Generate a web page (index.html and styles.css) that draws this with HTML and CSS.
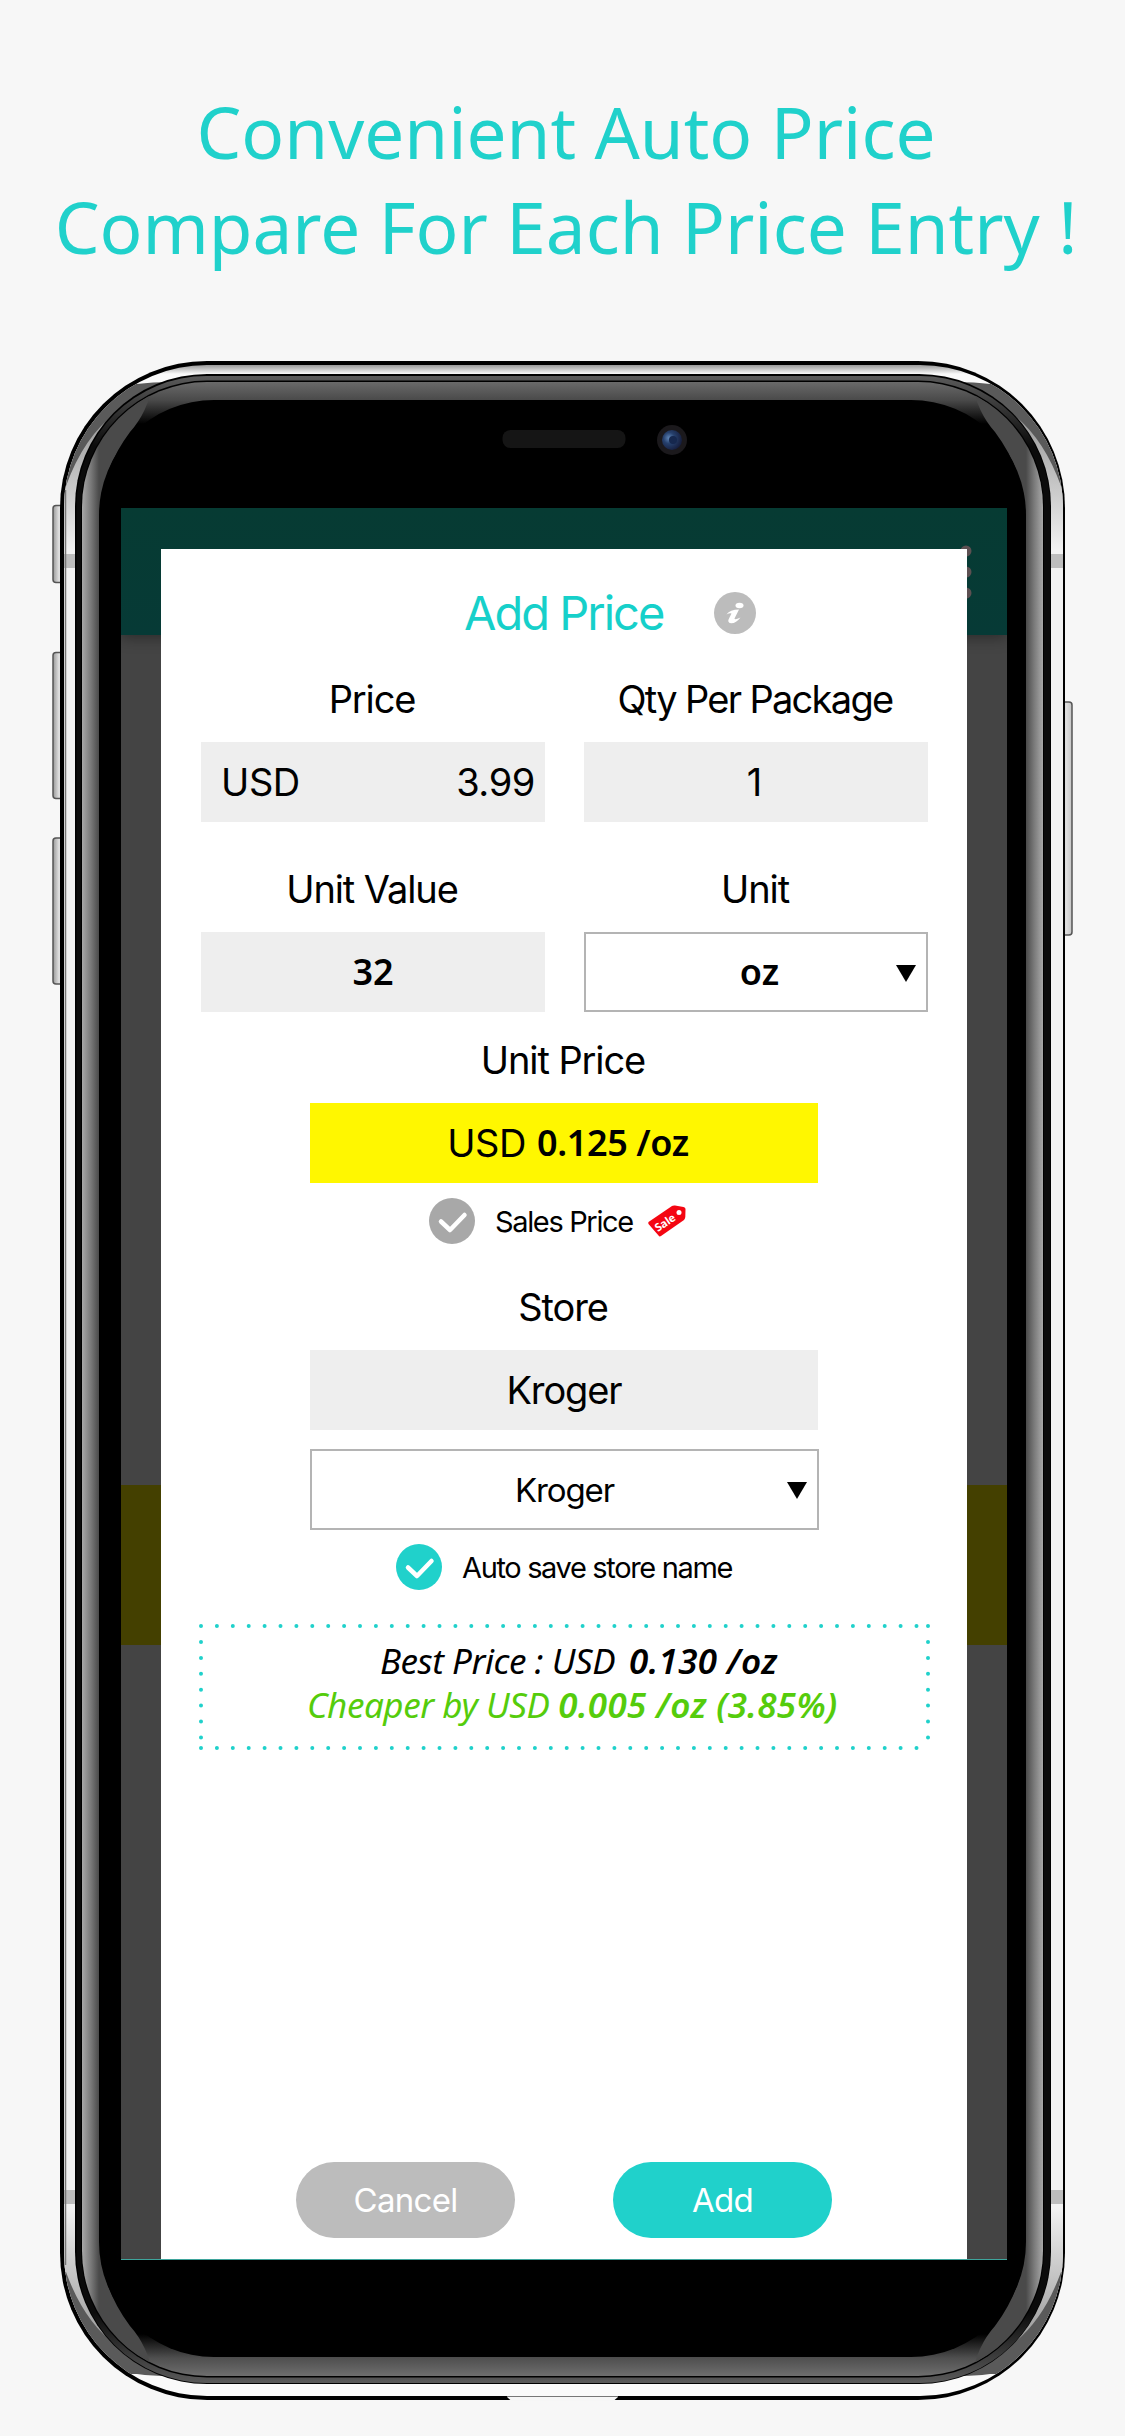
FILE: index.html
```html
<!DOCTYPE html>
<html lang="en">
<head>
<meta charset="utf-8">
<title>Add Price</title>
<link rel="stylesheet" href="styles.css">
</head>
<body>
<main class="page">
  <h1 class="headline">Convenient Auto Price<br>Compare For Each Price Entry !</h1>

  <div class="phone">
    <svg class="phone-frame" viewBox="40 350 1045 2060" width="1045" height="2060" aria-hidden="true">
      <defs>
        <linearGradient id="rim" gradientUnits="userSpaceOnUse" x1="0" y1="365" x2="0" y2="374"><stop offset="0" stop-color="#999"/><stop offset="1" stop-color="#fafafa"/></linearGradient>
        <linearGradient id="rimSide" gradientUnits="userSpaceOnUse" x1="0" y1="420" x2="0" y2="550"><stop offset="0" stop-color="#9c9c9c"/><stop offset=".6" stop-color="#cfcfcf"/><stop offset="1" stop-color="#f2f2f2"/></linearGradient>
        <linearGradient id="band" gradientUnits="userSpaceOnUse" x1="0" y1="376" x2="0" y2="2383"><stop offset="0" stop-color="#5a5a5a"/><stop offset=".01" stop-color="#444"/><stop offset=".035" stop-color="#0b0b0b"/><stop offset=".965" stop-color="#0b0b0b"/><stop offset=".99" stop-color="#444"/><stop offset="1" stop-color="#5a5a5a"/></linearGradient>
        <linearGradient id="bezel" gradientUnits="userSpaceOnUse" x1="0" y1="382" x2="0" y2="2376"><stop offset="0" stop-color="#6a6a6a"/><stop offset=".009" stop-color="#4a4a4a"/><stop offset=".021" stop-color="#000"/><stop offset=".979" stop-color="#000"/><stop offset=".991" stop-color="#4f4f4f"/><stop offset="1" stop-color="#6e6e6e"/></linearGradient>
        <linearGradient id="edge" gradientUnits="userSpaceOnUse" x1="82" y1="0" x2="99" y2="0"><stop offset="0" stop-color="#a8a8a8"/><stop offset=".55" stop-color="#777"/><stop offset="1" stop-color="#4a4a4a"/></linearGradient>
        <linearGradient id="key" x1="0" y1="0" x2="1" y2="0"><stop offset="0" stop-color="#999"/><stop offset=".5" stop-color="#e0e0e0"/><stop offset="1" stop-color="#c4c4c4"/></linearGradient>
        <radialGradient id="lens" cx=".35" cy=".4" r=".7"><stop offset="0" stop-color="#5f86b8"/><stop offset=".4" stop-color="#26406c"/><stop offset="1" stop-color="#141a38"/></radialGradient>
        <clipPath id="rimClip"><rect x="64" y="365" width="999" height="2031" rx="143"/></clipPath>
        <clipPath id="bezelClip"><rect x="82" y="382" width="961" height="1994" rx="125"/></clipPath>
        <g id="rimCorner">
          <path d="M60 400H150V1400H60Z" fill="url(#rimSide)"/>
          <path d="M60 384H137Q152 382 172 382L150 396L117 412Q84 436 66 486H60Z" fill="#5a5a5a"/>
          <rect x="60" y="554" width="20" height="14" fill="#bdbdbd"/>
        </g>
        <path id="bezelCorner" d="M82 382H153Q148 412 130 432Q103 468 100 510V1400H82Z" fill="url(#edge)"/>
      </defs>
      <g fill="url(#key)" stroke="#555" stroke-width="1.500">
        <rect x="53" y="505.500" width="12" height="77" rx="3"/>
        <rect x="53" y="652.500" width="12" height="146" rx="3"/>
        <rect x="53" y="838" width="12" height="146" rx="3"/>
        <rect x="1060" y="702" width="12" height="233" rx="3"/>
      </g>
      <rect x="60" y="361" width="1005" height="2039" rx="147"/>
      <rect x="64" y="365" width="999" height="2031" rx="143" fill="url(#rim)"/>
      <g clip-path="url(#rimClip)">
        <use href="#rimCorner"/>
        <use href="#rimCorner" transform="translate(1127 0) scale(-1 1)"/>
        <use href="#rimCorner" transform="translate(0 2758) scale(1 -1)"/>
        <use href="#rimCorner" transform="translate(1127 2758) scale(-1 -1)"/>
      </g>
      <path d="M65.500 490V2265" stroke="#777" stroke-width="1.500"/>
      <rect x="75" y="374" width="976" height="2010" rx="132"/>
      <rect x="76.500" y="376" width="973.500" height="2007" rx="130" fill="url(#band)"/>
      <rect x="81" y="380.500" width="963" height="1997" rx="126"/>
      <rect x="82" y="382" width="961" height="1994" rx="125" fill="url(#bezel)"/>
      <g clip-path="url(#bezelClip)">
        <use href="#bezelCorner"/>
        <use href="#bezelCorner" transform="translate(1125 0) scale(-1 1)"/>
        <use href="#bezelCorner" transform="translate(0 2758) scale(1 -1)"/>
        <use href="#bezelCorner" transform="translate(1125 2758) scale(-1 -1)"/>
      </g>
      <rect x="99" y="400" width="927" height="1957" rx="115"/>
      <rect x="502.500" y="430" width="123" height="18" rx="8" fill="#151515"/>
      <circle cx="672" cy="440" r="15" fill="#1b191c"/>
      <circle cx="672" cy="440" r="10" fill="url(#lens)"/>
      <circle cx="673" cy="440" r="4" fill="#16284e"/>
      <path d="M507 2397H618L614 2400.500H511Z" fill="#f6f6f6"/>
      <path d="M507 2396.500H618" stroke="#777"/>
    </svg>

    <div class="screen">
      <div class="app-bar">
        <svg class="more" width="12" height="54" viewBox="0 0 12 54" aria-hidden="true"><g fill="#5d5052"><circle cx="6" cy="6" r="5.500"/><circle cx="6" cy="27" r="5.500"/><circle cx="6" cy="48" r="5.500"/></g></svg>
      </div>
      <div class="highlight-row"></div>

      <form class="dialog">
        <header class="dialog-title">
          <h2 class="title">Add Price</h2>
          <svg class="info" width="42" height="42" viewBox="0 0 42 42" aria-hidden="true"><circle cx="21" cy="21" r="21" fill="#bcbcbc"/><ellipse cx="25.500" cy="13.500" rx="4" ry="2.800" fill="#fff"/><path d="M12.500 22.500Q16 17.500 25 17.500L20.500 26.500Q20.500 28.500 26.500 25.500Q22 31.500 17 31.300Q12.500 30.500 15.500 25.500L17.500 21.500Q16 20.500 12.500 22.500Z" fill="#fff"/></svg>
        </header>

        <div class="grid">
          <div class="field"><span class="label">Price</span><div class="box split"><span>USD</span><span>3.99</span></div></div>
          <div class="field"><span class="label tight">Qty Per Package</span><div class="box one">1</div></div>
          <div class="field"><span class="label">Unit Value</span><div class="box strong">32</div></div>
          <div class="field"><span class="label">Unit</span><div class="box select strong unit">oz<i class="caret"></i></div></div>
        </div>

        <section class="narrow">
          <span class="label">Unit Price</span>
          <div class="box result"><span>USD</span><span class="strong">0.125 /oz</span></div>
          <div class="check sale">
            <svg width="46" height="46" viewBox="0 0 46 46" aria-hidden="true"><circle cx="23" cy="23" r="23" fill="#a8a8a8"/><path d="M12 23.500L21 32L35.500 17" fill="none" stroke="#fff" stroke-width="4.500" stroke-linecap="round" stroke-linejoin="round"/></svg>
            <span>Sales Price</span>
            <svg class="tag" width="38" height="32" viewBox="0 0 38 32" aria-hidden="true"><path d="M0.500 17L24 1Q25 .3 27 .5L35.500 2Q37.500 2.300 37.500 4L37.300 12Q37 14 36 15L13 31Q11.500 32 10.500 30.500L.5 19Q0 18 .5 17Z" fill="#f40612"/><circle cx="31" cy="7.500" r="2.500" fill="#fff"/><text x="17" y="21.500" transform="rotate(-34 17 17.500)" text-anchor="middle" class="tag-text">Sale</text></svg>
          </div>
          <span class="label">Store</span>
          <div class="box name">Kroger</div>
          <div class="box select small name">Kroger<i class="caret"></i></div>
          <div class="check auto">
            <svg width="46" height="46" viewBox="0 0 46 46" aria-hidden="true"><circle cx="23" cy="23" r="23" fill="#20d1cb"/><path d="M12 23.500L21 32L35.500 17" fill="none" stroke="#fff" stroke-width="4.500" stroke-linecap="round" stroke-linejoin="round"/></svg>
            <span>Auto save store name</span>
          </div>
        </section>

        <section class="compare">
          <svg class="dots" width="732" height="127" viewBox="0 0 732 127" aria-hidden="true"><g fill="none" stroke="#20d1cb" stroke-width="4" stroke-linecap="round"><path d="M2 2H729M729 2H729.100" stroke-dasharray="0 15.900"/><path d="M2 124H729" stroke-dasharray="0 15.900"/><path d="M2 18V115" stroke-dasharray="0 15.900"/><path d="M729 18V115" stroke-dasharray="0 15.900"/></g></svg>
          <p class="best"><span>Best Price : USD</span><b>0.130 /oz</b></p>
          <p class="cheaper"><span>Cheaper by USD</span><b>0.005 /oz (3.85%)</b></p>
        </section>

        <footer class="actions">
          <button type="button" class="btn cancel">Cancel</button>
          <button type="button" class="btn add">Add</button>
        </footer>
      </form>
    </div>
  </div>
</main>
</body>
</html>
```
FILE: styles.css
```css
* { box-sizing: border-box; }

body {
  margin: 0;
  background: #f7f7f7;
  font-family: Inter, "Liberation Sans", sans-serif;
  color: #000;
}

.page {
  width: 1125px;
  height: 2436px;
  overflow: hidden;
  display: flex;
  flex-direction: column;
}

.headline {
  margin: 0;
  height: 350px;
  padding: 84px 0 0 7px;
  text-align: center;
  font: 400 71px/95px "Noto Sans", "Open Sans", sans-serif;
  color: #20d1cb;
  white-space: nowrap;
}

.phone {
  position: relative;
  width: 1045px;
  height: 2060px;
  margin-left: 40px;
  padding: 158px 78px 150px 81px;
}

.phone-frame {
  position: absolute;
  left: 0;
  top: 0;
}

.screen {
  position: relative;
  height: 1752px;
  padding: 41px 40px 0;
  background: #444;
  border-bottom: 1px solid #3fa59c;
}

.app-bar {
  position: absolute;
  inset: 0 0 auto;
  height: 127px;
  background: linear-gradient(#063b33, #063a36);
  box-shadow: 0 2px 14px rgba(0, 0, 0, .4);
}

.more {
  position: absolute;
  right: 35px;
  top: 37px;
}

.highlight-row {
  position: absolute;
  inset: 977px 0 auto;
  height: 160px;
  background: #444000;
}

.dialog {
  position: relative;
  height: 1710px;
  display: flex;
  flex-direction: column;
  padding: 0 39px 21px 40px;
  background: #fff;
}

.dialog-title {
  height: 127px;
  display: flex;
  align-items: center;
  padding-left: 263px;
  gap: 51px;
}

.title {
  margin: 0;
  width: 199px;
  font-size: 47px;
  font-weight: 400;
  line-height: 60px;
  letter-spacing: -2px;
  color: #16d0ca;
  white-space: nowrap;
}

.info { flex: none; }

.grid {
  display: grid;
  grid-template-columns: 344px 344px;
  column-gap: 39px;
  row-gap: 44px;
}

.label {
  display: block;
  height: 47px;
  margin-bottom: 19px;
  padding-right: 2px;
  text-align: center;
  font-size: 38px;
  line-height: 47px;
  letter-spacing: -1.1px;
  white-space: nowrap;
}

.label.tight { letter-spacing: -1.7px; }

.box {
  height: 80px;
  display: flex;
  align-items: center;
  justify-content: center;
  background: #eee;
  font-size: 38px;
  line-height: 80px;
  white-space: nowrap;
}

.box.split {
  justify-content: space-between;
  padding: 0 10px 0 20px;
}

.box.split, .box.result { letter-spacing: -.4px; }

.box.one { padding-right: 3px; }

.box.name { letter-spacing: -1.1px; }

.strong {
  font-family: "Noto Sans", "Open Sans", sans-serif;
  font-weight: 600;
  font-size: 36px;
}

.box.select {
  position: relative;
  background: #fff;
  border: 2px solid #b4b4b4;
}

.box.unit { padding-left: 7px; }

.caret {
  position: absolute;
  right: 10px;
  top: 31px;
  border: solid transparent;
  border-width: 17px 10px 0;
  border-top-color: #000;
}

.narrow {
  width: 508px;
  margin: 25px 0 0 109px;
}

.box.result {
  background: #fff700;
  gap: 11px;
  padding-left: 8px;
}

.box.small {
  width: 509px;
  height: 81px;
  margin-top: 19px;
  font-size: 33px;
}

.check {
  height: 46px;
  display: flex;
  align-items: center;
  font-size: 29px;
  letter-spacing: -1.35px;
  white-space: nowrap;
}

.sale { margin: 15px 0 40px; padding-left: 119px; gap: 20px; }
.auto { margin-top: 14px; padding-left: 86px; gap: 20px; }

.tag { margin-left: -5px; }

.tag-text {
  font: 700 11px "Noto Sans", sans-serif;
  letter-spacing: 0;
  fill: #fff;
}

.compare {
  position: relative;
  height: 125px;
  margin-top: 35px;
  padding-top: 14px;
  font: italic 400 35px/44px "Noto Sans", "Open Sans", sans-serif;
  white-space: nowrap;
}

.compare span { letter-spacing: -.45px; }

.compare b {
  font-weight: 600;
  letter-spacing: .3px;
}

.dots {
  position: absolute;
  left: -2px;
  top: -1px;
}

.best, .cheaper {
  margin: 0;
  height: 44px;
  display: flex;
}

.best { padding-left: 179px; gap: 14px; }
.cheaper { padding-left: 106px; gap: 9px; color: #55cc0c; }

.actions {
  display: flex;
  gap: 98px;
  margin: auto 0 0 95px;
}

.btn {
  width: 219px;
  height: 76px;
  padding: 0;
  border: 0;
  border-radius: 38px;
  font: 400 33px/76px Inter, sans-serif;
  letter-spacing: -.7px;
  color: #fff;
}

.cancel { background: #bcbcbc; }
.add { background: #20d1cb; }
```
